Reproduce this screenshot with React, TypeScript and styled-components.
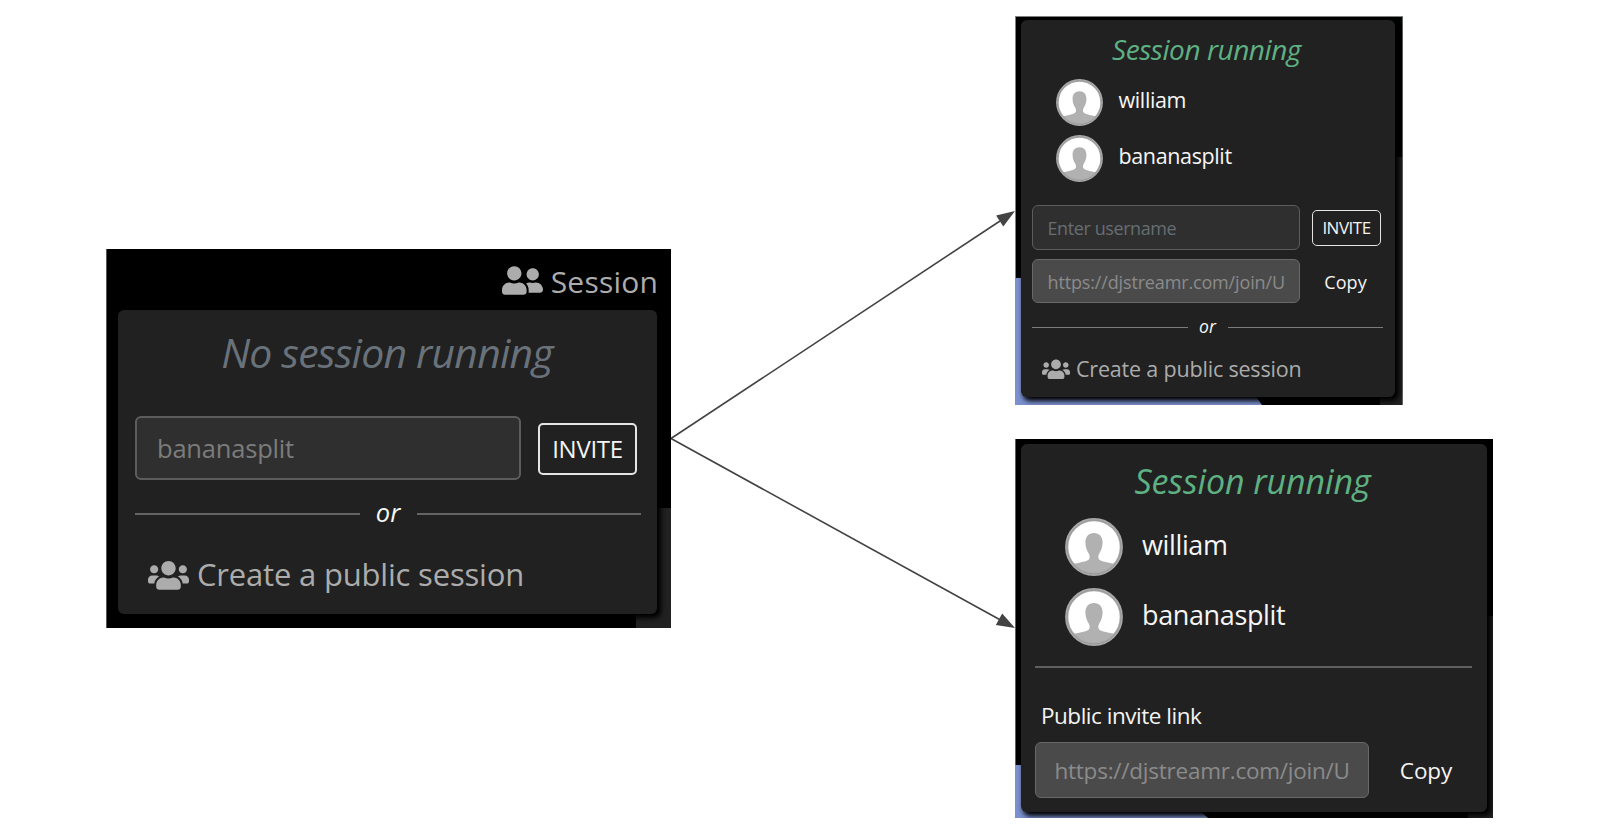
import React from "react";
import styled, { createGlobalStyle } from "styled-components";
import { FaUserFriends, FaUsers } from "react-icons/fa";

const GlobalStyle = createGlobalStyle`
  *, *::before, *::after { box-sizing: border-box; }
  html, body { margin: 0; padding: 0; background: #fff; }
  body { font-family: "Open Sans", "Noto Sans", sans-serif; }
`;

const Diagram = styled.main`
  position: relative;
  width: 1598px;
  height: 840px;
  background: #fff;
  overflow: hidden;
`;

const Connectors = styled.svg`
  position: absolute;
  inset: 0;
  fill: #434343;
  stroke: none;

  line {
    stroke: #434343;
    stroke-width: 1.6;
  }
`;

/* Screens are nodes of the flow diagram */
const Screen = styled.section`
  position: absolute;
  display: flex;
  flex-direction: column;
  overflow: hidden;
  background-color: #000;
  background-repeat: no-repeat;
  background-position: right bottom;
  background-image: linear-gradient(#212121, #212121);
`;

const IdleScreen = styled(Screen)`
  left: 106px;
  top: 249px;
  width: 565px;
  height: 379px;
  padding: 0 14px 14px 12px;
  background-size: 35.5px 120px;
  box-shadow: inset 1px 0 #565656;
`;

const PrivateScreen = styled(Screen)`
  left: 1015px;
  top: 16px;
  width: 388px;
  height: 389px;
  padding: 4px 8px 8px 6px;
  background-size: 23px 248px;
  box-shadow: inset 1px 1px #7d8080, inset -1px 0 #606464;
`;

const PublicScreen = styled(Screen)`
  left: 1015px;
  top: 439px;
  width: 478px;
  height: 379px;
  padding: 5px 6px 6px;
  background-size: 25px 202px;
  box-shadow: inset 1px 0 #606060;
`;

const BlueShape = styled.div<{ $w: number; $h: number; $cut: number }>`
  position: absolute;
  left: 0;
  bottom: 0;
  width: ${(p) => p.$w}px;
  height: ${(p) => p.$h}px;
  background: #7b90cf;
  clip-path: polygon(0 0, calc(100% - ${(p) => p.$cut}px) 0, 100% 100%, 0 100%);
`;

const TopBar = styled.header`
  display: flex;
  align-items: center;
  justify-content: flex-end;
  gap: 8px;
  height: 61px;
  padding: 4px 0 0;
  margin-right: -1px;
  color: #acacac;
  font-size: 30px;
  letter-spacing: 0.2px;
  line-height: 40px;

  svg {
    width: 41px;
    height: 33px;
    margin-top: -3px;
  }
`;

const Card = styled.div<{ $pad: string }>`
  position: relative;
  flex: 1;
  display: flex;
  flex-direction: column;
  padding: ${(p) => p.$pad};
  background: #212121;
  border-radius: 6px;
  box-shadow: 3px 3px 5px 1px #000;
`;

const Title = styled.h2<{ $size: number; $height: number; $top: number; $track: number; $running?: boolean }>`
  margin: 0 2px 0 0;
  padding-top: ${(p) => p.$top}px;
  height: ${(p) => p.$height}px;
  line-height: ${(p) => p.$height - p.$top}px;
  font-size: ${(p) => p.$size}px;
  letter-spacing: ${(p) => p.$track}px;
  font-style: italic;
  font-weight: 400;
  text-align: center;
  white-space: nowrap;
  color: ${(p) => (p.$running ? "#5eb183" : "#69727a")};
`;

const Members = styled.ul<{ $indent: number }>`
  margin: 0;
  padding: 0 0 0 ${(p) => p.$indent}px;
  list-style: none;
`;

const Member = styled.li<{ $row: number; $gap: number; $avatar: number }>`
  display: flex;
  align-items: center;
  gap: ${(p) => p.$gap}px;
  height: ${(p) => p.$row}px;

  svg {
    flex: none;
    width: ${(p) => p.$avatar}px;
    height: ${(p) => p.$avatar}px;
  }
`;

const MemberName = styled.span<{ $size: number; $lift: number }>`
  padding-bottom: ${(p) => p.$lift}px;
  color: #f6f6f6;
  font-size: ${(p) => p.$size}px;
  letter-spacing: -0.37px;
`;

const FieldRow = styled.div<{ $gap: number; $top: number }>`
  display: flex;
  align-items: center;
  gap: ${(p) => p.$gap}px;
  margin-top: ${(p) => p.$top}px;
`;

const Field = styled.div<{
  $w: number;
  $h: number;
  $pad: number;
  $size: number;
  $track: number;
  $line?: number;
  $drop?: number;
  $readOnly?: boolean;
  $placeholder?: boolean;
}>`
  flex: none;
  display: flex;
  align-items: center;
  width: ${(p) => p.$w}px;
  height: ${(p) => p.$h}px;
  padding: ${(p) => p.$drop ?? 0}px 0 0 ${(p) => p.$pad}px;
  border: ${(p) => p.$line ?? 1}px solid ${(p) => (p.$readOnly ? "#686868" : "#5c5c5c")};
  border-radius: 6px;
  background: ${(p) => (p.$readOnly ? "#4a4a4a" : "#2f2f2f")};
  color: ${(p) => (p.$placeholder ? "#666d73" : p.$readOnly ? "#8b8b8b" : "#7c7c7c")};
  font-size: ${(p) => p.$size}px;
  letter-spacing: ${(p) => p.$track}px;
  white-space: nowrap;
`;

const Action = styled.button<{ $w: number; $h: number; $size: number; $track: number; $line?: number; $drop?: number }>`
  flex: none;
  display: flex;
  align-items: center;
  justify-content: center;
  width: ${(p) => p.$w}px;
  height: ${(p) => p.$h}px;
  margin-top: 1px;
  padding: ${(p) => p.$drop ?? 0}px 0 0;
  border: ${(p) => p.$line ?? 0}px solid #e4e4e4;
  border-radius: 5px;
  background: transparent;
  color: #f4f4f4;
  font-family: inherit;
  font-size: ${(p) => p.$size}px;
  letter-spacing: ${(p) => p.$track}px;
`;

const OrDivider = styled.div<{ $top: number; $gap: number; $size: number; $line: number; $lift: number }>`
  display: flex;
  align-items: center;
  height: 30px;
  margin-top: ${(p) => p.$top}px;
  color: #f8f8f8;
  font-size: ${(p) => p.$size}px;
  font-style: italic;
  font-weight: 500;

  &::before,
  &::after {
    content: "";
    flex: 1;
    height: ${(p) => p.$line}px;
    background: ${(p) => (p.$line > 1 ? "#646464" : "#7b7b7b")};
  }

  span {
    width: ${(p) => p.$gap}px;
    padding-bottom: ${(p) => p.$lift}px;
    text-align: center;
  }
`;

const Rule = styled.hr`
  width: 100%;
  height: 2px;
  margin: 14px 0 0;
  border: 0;
  background: #5f5f5f;
`;

const FieldLabel = styled.div`
  height: 40px;
  margin: 27.6px 0 6.4px;
  padding-left: 6px;
  color: #f4f4f4;
  font-size: 22.5px;
  letter-spacing: -0.48px;
  line-height: 40px;
`;

const CreateLink = styled.div<{ $top: number; $indent: number; $gap: number; $size: number; $icon: number; $lift: number }>`
  display: flex;
  align-items: center;
  gap: ${(p) => p.$gap}px;
  height: 40px;
  margin-top: ${(p) => p.$top}px;
  padding-left: ${(p) => p.$indent}px;
  color: #acacac;
  font-size: ${(p) => p.$size}px;
  letter-spacing: -0.19px;
  white-space: nowrap;

  svg {
    flex: none;
    width: ${(p) => p.$icon}px;
    height: ${(p) => p.$icon * 0.8}px;
  }

  span {
    padding-bottom: ${(p) => p.$lift}px;
  }
`;

const Avatar = () => (
  <svg viewBox="0 0 58 58">
    <clipPath id="avatar-disc">
      <circle cx="29" cy="29" r="27.5" />
    </clipPath>
    <circle cx="29" cy="29" r="28" fill="#fff" />
    <path
      clipPath="url(#avatar-disc)"
      fill="#b1b1b1"
      d="M29 15c-5.4 0-8.600 3.800-8.600 9.300 0 4.500 1.500 8.200 3.200 10.900 1.100 1.800 1.300 3.700.8 5.200-.7 1.900-3 2.500-6 3.400-4.300 1.300-8.500 2-13.400 2.500V58h48V46.300c-4.900-.5-9.100-1.200-13.400-2.500-3-.9-5.300-1.500-6-3.400-.5-1.500-.3-3.400.8-5.200 1.700-2.700 3.200-6.400 3.200-10.900C37.600 18.800 34.400 15 29 15z"
    />
    <circle cx="29" cy="29" r="27.300" fill="none" stroke="#a9a9a9" strokeWidth="3.200" />
    <circle cx="29" cy="29" r="27" fill="none" stroke="#979797" strokeWidth="0.900" />
  </svg>
);

const members = ["william", "bananasplit"];
const joinUrl = "https://djstreamr.com/join/U";

export default function App() {
  return (
    <>
      <GlobalStyle />
      <Diagram>
        <Connectors width="1598" height="840" viewBox="0 0 1598 840">
          <line x1="671" y1="438.500" x2="1000" y2="221" />
          <line x1="671" y1="438.500" x2="1000" y2="619.700" />
          <polygon points="1015,211 1003.300,226.600 996.100,215.600" />
          <polygon points="1015,628 995.800,625 1002.200,613.400" />
        </Connectors>

        <IdleScreen>
          <TopBar>
            <FaUserFriends />
            <span>Session</span>
          </TopBar>
          <Card $pad="0 16px 0 17px">
            <Title $size={41} $height={82} $top={2} $track={-0.8}>No session running</Title>
            <FieldRow $gap={17} $top={24}>
              <Field $w={386} $h={64} $pad={20} $size={25.5} $track={-0.2} $line={2}>bananasplit</Field>
              <Action $w={99} $h={52} $size={24} $track={-0.3} $line={2}>INVITE</Action>
            </FieldRow>
            <OrDivider $top={19} $gap={57} $size={25.5} $line={2} $lift={4}>
              <span>or</span>
            </OrDivider>
            <CreateLink $top={26} $indent={13} $gap={8} $size={31} $icon={41} $lift={3}>
              <FaUsers />
              <span>Create a public session</span>
            </CreateLink>
          </Card>
        </IdleScreen>

        <PrivateScreen>
          <BlueShape $w={247} $h={127} $cut={90} />
          <Card $pad="0 12px 0 11px">
            <Title $size={28} $height={54.4} $top={4} $track={-0.45} $running>Session running</Title>
            <Members $indent={24}>
              {members.map((name) => (
                <Member key={name} $row={56} $gap={15.5} $avatar={47}>
                  <Avatar />
                  <MemberName $size={21.5} $lift={6}>{name}</MemberName>
                </Member>
              ))}
            </Members>
            <FieldRow $gap={12} $top={18.6}>
              <Field $w={268} $h={45} $pad={14.5} $size={18} $track={-0.41} $drop={2} $placeholder>Enter username</Field>
              <Action $w={69} $h={36} $size={17} $track={-0.5} $line={1}>INVITE</Action>
            </FieldRow>
            <FieldRow $gap={11} $top={9}>
              <Field $w={268} $h={44.5} $pad={14.5} $size={18} $track={-0.15} $drop={2} $readOnly>{joinUrl}</Field>
              <Action $w={69} $h={36} $size={18} $track={0.1} $drop={1}>Copy</Action>
            </FieldRow>
            <OrDivider $top={8.7} $gap={40} $size={17.5} $line={1} $lift={2}>
              <span>or</span>
            </OrDivider>
            <CreateLink $top={7.5} $indent={9.5} $gap={6.5} $size={21.5} $icon={28} $lift={2}>
              <FaUsers />
              <span>Create a public session</span>
            </CreateLink>
          </Card>
        </PrivateScreen>

        <PublicScreen>
          <BlueShape $w={193} $h={53} $cut={60} />
          <Card $pad="0 15px 0 14px">
            <Title $size={34} $height={68} $top={5.6} $track={-0.1} $running>Session running</Title>
            <Members $indent={29.5}>
              {members.map((name) => (
                <Member key={name} $row={70} $gap={19.5} $avatar={58}>
                  <Avatar />
                  <MemberName $size={27} $lift={4.4}>{name}</MemberName>
                </Member>
              ))}
            </Members>
            <Rule />
            <FieldLabel>Public invite link</FieldLabel>
            <FieldRow $gap={15} $top={0}>
              <Field $w={334} $h={56} $pad={18.5} $size={22.5} $track={-0.24} $drop={2} $readOnly>{joinUrl}</Field>
              <Action $w={84} $h={40} $size={22.5} $track={-0.1} $drop={1}>Copy</Action>
            </FieldRow>
          </Card>
        </PublicScreen>
      </Diagram>
    </>
  );
}
